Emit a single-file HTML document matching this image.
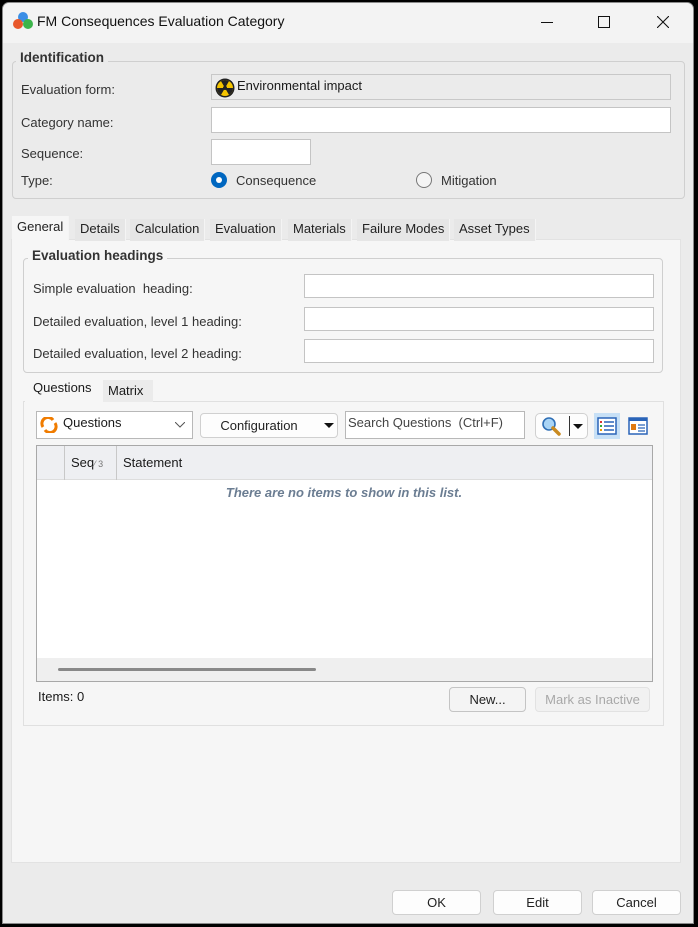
<!DOCTYPE html>
<html><head><meta charset="utf-8"><style>
*{box-sizing:border-box;margin:0;padding:0}
body{width:698px;height:927px;background:#000;position:relative;overflow:hidden;font-family:"Segoe UI","Liberation Sans","DejaVu Sans",sans-serif;font-size:13px;color:#1a1a1a}
.a{position:absolute}
.win{left:2px;top:2px;width:692px;height:922px;background:#ebebeb;border-radius:7px 7px 0 0;overflow:hidden;border:1px solid #8a8a8a}
.in{position:absolute;left:-3px;top:-2px;width:698px;height:927px}
.inp{position:absolute;background:#fff;border:1px solid #c4c4c4}
.lbl{position:absolute;color:#333}
.grp{position:absolute;border:1px solid #cfcfcf;border-radius:4px}
.gt{position:absolute;font-weight:bold;color:#333;font-size:13.5px;padding:0 4px}
.tab{position:absolute;top:218px;height:22px;background:#e6e6e6;padding:2px 5px 0;font-size:13px;color:#222;border-right:1px solid #f4f4f4}
.btn{position:absolute;background:#fdfdfd;border:1px solid #d0d0d0;border-radius:4px;text-align:center;color:#222}
</style></head><body>
<div class="a win"><div class="in">
 <div class="a" style="left:0;top:0;width:698px;height:42px;background:#f3f3f3"></div>
 <svg class="a" style="left:12px;top:10px" width="22" height="20"><circle cx="11" cy="6" r="5" fill="#3a8ee6"/><circle cx="6" cy="13" r="5" fill="#e8572a"/><circle cx="16" cy="13" r="5" fill="#3cb44a"/></svg>
 <div class="a" style="left:37px;top:12px;font-size:14px;color:#111">FM Consequences Evaluation Category</div>
 <div class="a" style="left:541px;top:21px;width:12px;height:1px;background:#111"></div>
 <div class="a" style="left:598px;top:15px;width:12px;height:12px;border:1px solid #111"></div>
 <svg class="a" style="left:657px;top:15px" width="12" height="12"><path d="M0 0L12 12M12 0L0 12" stroke="#111" stroke-width="1.1"/></svg>

 <div class="grp" style="left:12px;top:60px;width:673px;height:138px"></div>
 <div class="gt" style="left:16px;top:49px;background:#ebebeb">Identification</div>
 <div class="lbl" style="left:21px;top:81px">Evaluation form:</div>
 <div class="inp" style="left:211px;top:73px;width:460px;height:26px;background:#ebebeb;border-color:#c8c8c8"></div>
 <svg class="a" style="left:215px;top:77px" width="20" height="20"><circle cx="10" cy="10" r="9.5" fill="#222"/><circle cx="10" cy="10" r="8" fill="#f5c400"/><path d="M10 10L6 3.1A8 8 0 0 1 14 3.1Z M10 10L18 10A8 8 0 0 1 14 16.9Z M10 10L6 16.9A8 8 0 0 1 2 10Z" fill="#222"/><circle cx="10" cy="10" r="2" fill="#222"/></svg>
 <div class="a" style="left:237px;top:77px">Environmental impact</div>
 <div class="lbl" style="left:21px;top:114px">Category name:</div>
 <div class="inp" style="left:211px;top:106px;width:460px;height:26px"></div>
 <div class="lbl" style="left:21px;top:145px">Sequence:</div>
 <div class="inp" style="left:211px;top:138px;width:100px;height:26px"></div>
 <div class="lbl" style="left:21px;top:172px">Type:</div>
 <div class="a" style="left:211px;top:171px;width:16px;height:16px;border-radius:50%;background:#0067c0"></div>
 <div class="a" style="left:216px;top:176px;width:6px;height:6px;border-radius:50%;background:#fff"></div>
 <div class="lbl" style="left:236px;top:172px">Consequence</div>
 <div class="a" style="left:416px;top:171px;width:16px;height:16px;border-radius:50%;border:1px solid #777;background:#f4f4f4"></div>
 <div class="lbl" style="left:441px;top:172px">Mitigation</div>

 <div class="a" style="left:11px;top:238px;width:670px;height:624px;background:#f6f6f6;border:1px solid #e2e2e2"></div>
 <div class="tab" style="left:12px;top:215px;height:25px;background:#f6f6f6;padding-top:3px">General</div>
 <div class="tab" style="left:75px">Details</div>
 <div class="tab" style="left:130px">Calculation</div>
 <div class="tab" style="left:210px">Evaluation</div>
 <div class="tab" style="left:288px">Materials</div>
 <div class="tab" style="left:357px">Failure Modes</div>
 <div class="tab" style="left:454px">Asset Types</div>

 <div class="grp" style="left:23px;top:257px;width:640px;height:115px"></div>
 <div class="gt" style="left:28px;top:247px;background:#f6f6f6">Evaluation headings</div>
 <div class="lbl" style="left:33px;top:280px">Simple evaluation&nbsp; heading:</div>
 <div class="inp" style="left:304px;top:273px;width:350px;height:24px"></div>
 <div class="lbl" style="left:33px;top:313px">Detailed evaluation, level 1 heading:</div>
 <div class="inp" style="left:304px;top:306px;width:350px;height:24px"></div>
 <div class="lbl" style="left:33px;top:345px">Detailed evaluation, level 2 heading:</div>
 <div class="inp" style="left:304px;top:338px;width:350px;height:24px"></div>

 <div class="a" style="left:23px;top:400px;width:641px;height:325px;border:1px solid #e0e0e0;background:#f6f6f6"></div>
 <div class="a" style="left:25px;top:376px;width:78px;height:25px;background:#f6f6f6;padding:3px 0 0 8px">Questions</div>
 <div class="a" style="left:103px;top:379px;width:50px;height:22px;background:#ebebeb;padding:3px 0 0 5px">Matrix</div>

 <div class="inp" style="left:36px;top:410px;width:157px;height:28px;border-color:#b8b8b8"></div>
 <svg class="a" style="left:40px;top:416px" width="18" height="16"><path d="M3 10A6 6 0 0 1 13 3" stroke="#f07c00" stroke-width="3" fill="none"/><path d="M15 6A6 6 0 0 1 5 13" stroke="#f07c00" stroke-width="3" fill="none"/></svg>
 <div class="a" style="left:63px;top:414px">Questions</div>
 <svg class="a" style="left:175px;top:421px" width="10" height="6"><path d="M0 0L5 5L10 0" stroke="#555" fill="none"/></svg>
 <div class="btn" style="left:200px;top:412px;width:138px;height:25px;padding:4px 20px 0 0">Configuration</div>
 <div class="a" style="left:324px;top:422px;border:5px solid transparent;border-top:5px solid #111"></div>
 <div class="inp" style="left:345px;top:410px;width:180px;height:28px;border-color:#b8b8b8;padding:3px 2px;color:#444">Search Questions&nbsp; (Ctrl+F)</div>
 <div class="btn" style="left:535px;top:412px;width:53px;height:26px;border-radius:5px"></div>
 <svg class="a" style="left:540px;top:415px" width="24" height="20"><circle cx="9" cy="8" r="6" fill="#a9d4f5" stroke="#2f6fb6" stroke-width="1.6"/><path d="M13 12L19 18" stroke="#c98a20" stroke-width="3.5" stroke-linecap="round"/></svg>
 <div class="a" style="left:569px;top:415px;width:1px;height:20px;background:#333"></div>
 <div class="a" style="left:573px;top:423px;border:5px solid transparent;border-top:5px solid #111"></div>
 <div class="a" style="left:594px;top:412px;width:26px;height:26px;background:#c7e0f6"></div>
 <svg class="a" style="left:597px;top:416px" width="20" height="18"><rect x="1" y="1" width="18" height="16" fill="#fff" stroke="#2a64b8" stroke-width="1.5"/><rect x="3" y="4" width="2" height="2" fill="#d33"/><rect x="3" y="8" width="2" height="2" fill="#3a3"/><rect x="3" y="12" width="2" height="2" fill="#e90"/><path d="M7 5H17M7 9H17M7 13H17" stroke="#2a64b8" stroke-width="1.4"/></svg>
 <svg class="a" style="left:628px;top:416px" width="20" height="18"><rect x="1" y="1" width="18" height="16" fill="#fff" stroke="#2a64b8" stroke-width="1.5"/><rect x="1" y="1" width="18" height="3" fill="#2a64b8"/><rect x="3" y="7" width="5" height="6" fill="#e07a10"/><path d="M10 8H17M10 11H17M10 14H17" stroke="#2a64b8" stroke-width="1.3"/></svg>

 <div class="a" style="left:36px;top:444px;width:617px;height:237px;border:1px solid #a8a8a8;background:#fff"></div>
 <div class="a" style="left:37px;top:445px;width:615px;height:34px;background:#eeeff2;border-bottom:1px solid #ddd"></div>
 <div class="a" style="left:64px;top:445px;width:1px;height:34px;background:#c8c8c8"></div>
 <div class="a" style="left:116px;top:445px;width:1px;height:34px;background:#c8c8c8"></div>
 <div class="a" style="left:71px;top:454px">Seq<span style="font-size:9px;color:#777">⁄ 3</span></div>
 <div class="a" style="left:123px;top:454px">Statement</div>
 <div class="a" style="left:0;top:484px;width:672px;text-align:center;font-style:italic;font-weight:bold;color:#6b7d92;font-size:13px;padding-left:16px">There are no items to show in this list.</div>
 <div class="a" style="left:37px;top:657px;width:615px;height:23px;background:#efefef"></div>
 <div class="a" style="left:58px;top:667px;width:258px;height:3px;background:#888;border-radius:2px"></div>

 <div class="a" style="left:38px;top:688px">Items: 0</div>
 <div class="btn" style="left:449px;top:686px;width:77px;height:25px;padding-top:4px;background:#f4f4f4;border-color:#c4c4c4">New...</div>
 <div class="btn" style="left:535px;top:686px;width:115px;height:25px;padding-top:4px;background:#f1f1f1;border-color:#e2e2e2;color:#a8a8a8">Mark as Inactive</div>

 <div class="btn" style="left:392px;top:889px;width:89px;height:25px;padding-top:4px">OK</div>
 <div class="btn" style="left:493px;top:889px;width:89px;height:25px;padding-top:4px">Edit</div>
 <div class="btn" style="left:592px;top:889px;width:89px;height:25px;padding-top:4px">Cancel</div>
</div></div>
</body></html>
